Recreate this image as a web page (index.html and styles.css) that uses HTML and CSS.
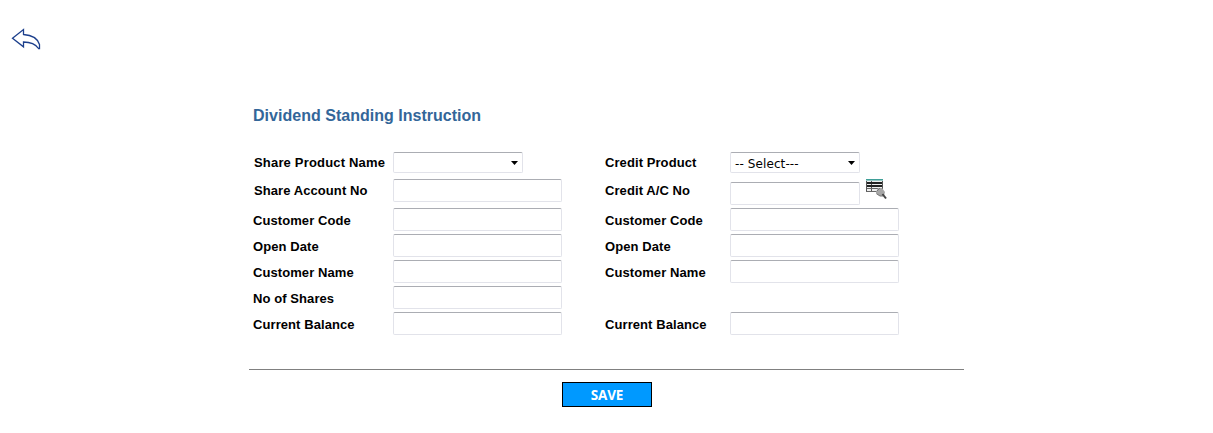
FILE: index.html
```html
<!DOCTYPE html>
<html lang="en">
<head>
<meta charset="utf-8">
<title>Dividend Standing Instruction</title>
<link rel="stylesheet" href="styles.css">
</head>
<body>
<header class="topbar">
  <a class="back" href="#" aria-label="Back"><svg width="32" height="24" viewBox="0 0 32 24" fill="none" stroke="#1c3f8c" stroke-width="1.3"><path d="M2.500 11.200 13.500 2.500v5C21 8 27.500 11 29.500 17.500v4H28.500C25.500 17 20 15 13.500 15v4.800Z"/></svg></a>
</header>
<main class="page">
  <h1 class="title">Dividend Standing Instruction</h1>
  <form class="form">
    <div class="column">
      <div class="row row-select"><label class="label label-wide indent">Share Product Name</label><div class="select"><span></span><i class="arrow"></i></div></div>
      <div class="row row-account"><label class="label indent">Share Account No</label><input class="input"></div>
      <div class="row"><label class="label">Customer Code</label><input class="input"></div>
      <div class="row"><label class="label">Open Date</label><input class="input"></div>
      <div class="row"><label class="label">Customer Name</label><input class="input"></div>
      <div class="row"><label class="label">No of Shares</label><input class="input"></div>
      <div class="row"><label class="label">Current Balance</label><input class="input"></div>
    </div>
    <div class="column column-right">
      <div class="row row-select"><label class="label">Credit Product</label><div class="select"><span>-- Select---</span><i class="arrow"></i></div></div>
      <div class="row row-account"><label class="label">Credit A/C No</label><input class="input input-short">
        <svg class="lookup" width="22" height="22" viewBox="0 0 22 22"><path d="M1 0h17v13H1z" fill="#eee"/><path d="M1 0h17v1.500H1z" fill="#3f9f98"/><path d="M1 2h1v11H1zM6 2h1v11H6zM17 2h1v8h-1z" fill="#555"/><path d="M2 3h15v2H2zM2 6h15v2H2z" fill="#222"/><path d="M2 9h11v1H2zM1 12h11v1H1z" fill="#666"/><path d="M13 9h4l3 4-1 4h-4l-4-2v-2Z" fill="#a6a6a6"/><path d="m12 12 3-3M12 15l3 2h3" stroke="#777" fill="none"/><path d="m17.500 15 3.500 4.500" stroke="#444" stroke-width="2"/></svg></div>
      <div class="row"><label class="label">Customer Code</label><input class="input"></div>
      <div class="row"><label class="label">Open Date</label><input class="input"></div>
      <div class="row"><label class="label">Customer Name</label><input class="input"></div>
      <div class="row"></div>
      <div class="row"><label class="label">Current Balance</label><input class="input"></div>
    </div>
  </form>
  <footer class="actions"><button class="save" type="button">SAVE</button></footer>
</main>
</body>
</html>
```
FILE: styles.css
```css
* { box-sizing: border-box; }
body { margin: 0; background: #fff; color: #000; font-family: "Liberation Sans", Arial, sans-serif; }
.topbar { height: 105px; padding: 27px 0 0 10px; }
.back, .back svg { display: block; width: 32px; }
.page { width: 715px; margin-left: 249px; }
.title { margin: 0; height: 44px; padding-left: 4px; font-size: 16px; line-height: 21px; letter-spacing: 0.02px; color: #336699; }
.form { display: flex; height: 220px; }
.column { width: 352px; padding: 0 0 0 4px; }
.row { display: flex; align-items: flex-start; height: 26px; padding-top: 1px; }
.row-select { height: 27px; padding-top: 3px; }
.row-account { height: 31px; padding-top: 3px; }
.label { width: 140px; font-size: 13px; font-weight: bold; line-height: 25px; letter-spacing: 0.08px; white-space: nowrap; }
.label-wide { letter-spacing: 0.18px; }
.indent { padding-left: 1px; }
.row-select .label { line-height: 21px; }
.row-account .label { line-height: 23px; }
.column-right .label { width: 125px; }
.input, .select { width: 169px; height: 23px; margin: 0; border: 1px solid #e2e3ea; border-top-color: #abadb3; border-radius: 2px; background: #fff; outline: 0; }
.select { display: flex; align-items: center; justify-content: space-between; width: 130px; height: 21px; padding: 1px 4px 0; font: 12px "DejaVu Sans", sans-serif; letter-spacing: 0.1px; }
.select span { padding-top: 2px; }
.arrow { width: 7px; height: 4px; background: #000; clip-path: polygon(0 0, 100% 0, 50% 100%); }
.input-short { width: 130px; margin-top: 3px; }
.lookup { display: block; margin-left: 5px; }
.actions { display: flex; justify-content: center; border-top: 1px solid #808080; padding-top: 12px; }
.save { width: 90px; height: 25px; padding: 0 0 0 1px; border: 1px solid #000; background: #0099ff; color: #fff; font: bold 13.5px "Open Sans", sans-serif; letter-spacing: -0.2px; }
```
